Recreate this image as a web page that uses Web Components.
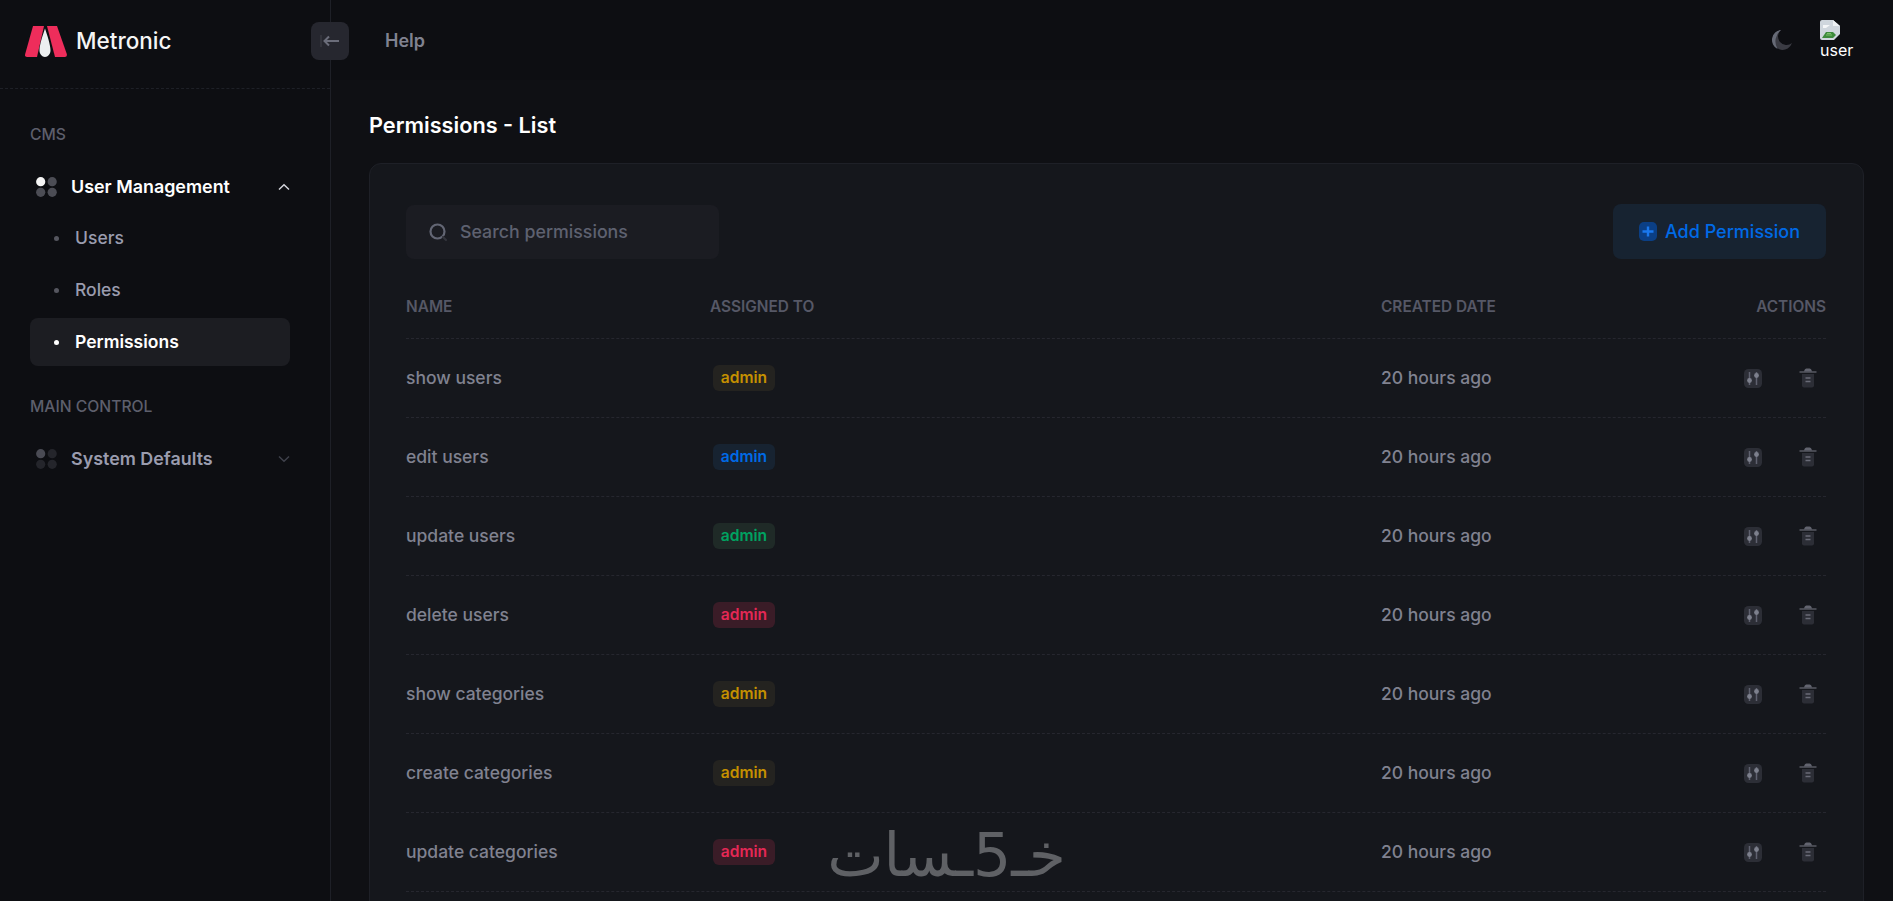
<!DOCTYPE html>
<html lang="en">
<head>
<meta charset="utf-8">
<title>Permissions - List</title>
<style>
  html, body { margin: 0; height: 901px; overflow: hidden; background: #0f1014; }
  body { font-family: Inter, "Noto Sans", sans-serif; }
</style>
</head>
<body>
<app-shell>
  <side-bar slot="side">
    <nav-label>CMS</nav-label>
    <nav-group label="User Management" open>
      <nav-link>Users</nav-link>
      <nav-link>Roles</nav-link>
      <nav-link active>Permissions</nav-link>
    </nav-group>
    <nav-label>MAIN CONTROL</nav-label>
    <nav-group label="System Defaults"></nav-group>
  </side-bar>
  <top-bar slot="top"></top-bar>
  <permissions-page slot="main"></permissions-page>
</app-shell>
<water-mark></water-mark>

<script>
const icons = {
  back: `<svg width="22" height="14" viewBox="0 0 22 14"><rect x="1" y="1" width="2" height="12" fill="#33343c"/><path d="M5.500 7H20" stroke="#6b6d7a" stroke-width="2"/><path d="M10 2.500 5.500 7l4.500 4.500" fill="none" stroke="#6b6d7a" stroke-width="2"/></svg>`,
  chevUp: `<svg width="12" height="8" viewBox="0 0 12 8"><path d="M1 6.500 6 1.800l5 4.700" fill="none" stroke="currentColor" stroke-width="1.500"/></svg>`,
  chevDown: `<svg width="12" height="8" viewBox="0 0 12 8"><path d="M1 1.500 6 6.200l5-4.700" fill="none" stroke="currentColor" stroke-width="1.500"/></svg>`,
  search: `<svg width="22" height="22" viewBox="0 0 22 22"><circle cx="10.500" cy="10.500" r="7" fill="none" stroke="#636674" stroke-width="2.200"/><path d="m16 16 3 3" stroke="#33343c" stroke-width="2.200" stroke-linecap="round"/></svg>`,
  plus: `<svg width="18" height="19" viewBox="0 0 18 19"><rect width="18" height="19" rx="5" fill="#0b3f85"/><path d="M9 4.500v10M3.500 9.500h11" stroke="#1a78ee" stroke-width="2.400"/></svg>`,
  sliders: `<svg width="18" height="19" viewBox="0 0 18 19"><rect width="18" height="19" rx="4.500" fill="#2c2e36"/><path d="M5.500 3v13M12.500 3v13" stroke="#5f6270" stroke-width="1.500"/><circle cx="5.500" cy="11.500" r="2.400" fill="#7d808d"/><circle cx="12.500" cy="6.500" r="2.400" fill="#7d808d"/></svg>`,
  trash: `<svg width="18" height="20" viewBox="0 0 18 20"><path d="M5 3.500C5.500 1 6.500 .5 9 .5s3.500 .5 4 3z" fill="#62646f"/><path d="M.5 4h17" stroke="#62646f" stroke-width="1.300"/><path d="M3 6h12v11.500a2 2 0 0 1-2 2H5a2 2 0 0 1-2-2z" fill="#2c2e36"/><path d="M6.500 10h5M6.500 13.500h5" stroke="#696b77" stroke-width="1.300"/></svg>`,
  moon: `<svg width="22" height="22" viewBox="0 0 22 22"><path d="M10 1A10 10 0 1 0 21 14 8.500 8.500 0 0 1 10 1z" fill="#3a3b43"/><path d="M10 1A10 10 0 0 0 6.500 19.900 14.500 14.500 0 0 1 10 1z" fill="#666a76"/></svg>`,
  broken: `<svg width="20" height="20" viewBox="0 0 20 20"><path d="M0 2q0-2 2-2h11l7 6v8l-6 6H2q-2 0-2-2z" fill="#cfd6dd"/><path d="M13 0v6h7z" fill="#eef1f4"/><path d="M3 5h7l-4 3H3z" fill="#f4f6f8"/><path d="M2 18 6 12h7l3 3-3 3z" fill="#3d8a3c"/><path d="M6 15h6M7 13.500h4" stroke="#7cc06a" stroke-width="1"/></svg>`
};

function dotGrid(bright, dim) {
  return `<svg class="dots" width="21" height="20" viewBox="0 0 21 20"><circle cx="4.700" cy="4.700" r="4.600" fill="${bright}"/><circle cx="16.200" cy="4.700" r="4.600" fill="${dim}"/><circle cx="4.700" cy="15.300" r="4.600" fill="${dim}"/><circle cx="16.200" cy="15.300" r="4.600" fill="${dim}"/></svg>`;
}

class AppShell extends HTMLElement {
  constructor() {
    super();
    this.attachShadow({ mode: 'open' }).innerHTML = `
      <style>
        :host { display: grid; grid-template-columns: 331px 1fr; grid-template-rows: 88px 1fr; height: 901px; overflow: hidden; }
        .side { grid-row: 1 / 3; }
        .main { min-width: 0; overflow: hidden; }
      </style>
      <div class="side"><slot name="side"></slot></div>
      <div><slot name="top"></slot></div>
      <div class="main"><slot name="main"></slot></div>
    `;
  }
}

class SideBar extends HTMLElement {
  constructor() {
    super();
    this.attachShadow({ mode: 'open' }).innerHTML = `
      <style>
        :host { display: block; height: 901px; box-sizing: border-box; background: #0d0e12; border-right: 1px solid #1e2027; position: relative; }
        .brand { height: 89px; box-sizing: border-box; border-bottom: 1px dashed #1e2027; display: flex; align-items: center; gap: 9px; padding: 0 0 6px 25px; }
        .brand span { font: 500 22.500px/1 Inter, sans-serif; color: #f5f5f5; }
        .toggle { position: absolute; left: 311px; top: 22px; width: 38px; height: 38px; border-radius: 8px; background: #26272f; display: flex; align-items: center; justify-content: center; z-index: 2; }
        nav { padding: 36px 40px 0 30px; display: flex; flex-direction: column; }
      </style>
      <div class="brand">
        <svg width="42" height="31" viewBox="0 0 42 31">
          <path d="M8 0h11L12 31H2Q-.5 31 .2 28z" fill="#ee2d5b"/>
          <path d="M22 0h10l9.800 28q.6 3-2 3H30z" fill="#ee2d5b"/>
          <path d="M20 2.500c2 6 5.500 16 5.500 22 0 3.500-2.500 6.500-5.500 6.500s-5.500-3-5.500-6.500c0-6 3.500-16 5.500-22z" fill="#eceff0"/>
        </svg>
        <span>Metronic</span>
      </div>
      <div class="toggle">${icons.back}</div>
      <nav><slot></slot></nav>
    `;
  }
}

class NavLabel extends HTMLElement {
  constructor() {
    super();
    this.attachShadow({ mode: 'open' }).innerHTML = `
      <style>
        :host { display: block; height: 20px; font: 500 15.700px/20px Inter, sans-serif; color: #5d5f6c; margin: 0 0 20px; text-transform: uppercase; }
      </style>
      <slot></slot>
    `;
  }
}

class NavGroup extends HTMLElement {
  constructor() {
    super();
    this.attachShadow({ mode: 'open' });
  }
  connectedCallback() {
    const open = this.hasAttribute('open');
    const label = this.getAttribute('label');
    this.shadowRoot.innerHTML = `
      <style>
        :host { display: block; margin-bottom: ${open ? '31px' : '0'}; }
        .head { display: flex; align-items: center; height: 44px; padding: 0 0 0 6px; font: 600 17.900px/1 Inter, sans-serif; color: ${open ? '#fff' : '#9a9cae'}; }
        .dots { flex: none; margin-right: 14px; }
        .chev { margin-left: auto; display: flex; color: ${open ? '#d4d5dc' : '#3f414b'}; }
        .kids { display: flex; flex-direction: column; margin-top: 5px; gap: 4px; }
      </style>
      <div class="head">
        ${open ? dotGrid('#f5f5f5', '#4c4d55') : dotGrid('#4a4b54', '#24252b')}
        <span>${label}</span>
        <span class="chev">${open ? icons.chevUp : icons.chevDown}</span>
      </div>
      ${open ? '<div class="kids"><slot></slot></div>' : ''}
    `;
  }
}

class NavLink extends HTMLElement {
  constructor() {
    super();
    this.attachShadow({ mode: 'open' }).innerHTML = `
      <style>
        :host { display: flex; align-items: center; height: 48px; padding-left: 24px; border-radius: 8px; font: 500 17.500px/1 Inter, sans-serif; color: #9a9cae; }
        :host([active]) { background: #1c1d22; color: #fff; font-weight: 600; }
        i { width: 5px; height: 5px; border-radius: 50%; background: #55565f; margin-right: 16px; }
        :host([active]) i { background: #fff; }
      </style>
      <i></i><slot></slot>
    `;
  }
}

class TopBar extends HTMLElement {
  constructor() {
    super();
    this.attachShadow({ mode: 'open' }).innerHTML = `
      <style>
        :host { display: flex; align-items: center; height: 80px; padding: 0 40px 0 54px; background: #0d0e12; font-family: Inter, sans-serif; }
        .help { font-weight: 600; font-size: 18px; color: #808290; }
        .right { margin-left: auto; display: flex; align-items: center; gap: 27px; }
        .moon { display: flex; }
        .user { display: flex; flex-direction: column; width: 33px; color: #fff; font-size: 16px; line-height: 21px; }
        .user svg { display: block; }
      </style>
      <span class="help">Help</span>
      <div class="right">
        <span class="moon">${icons.moon}</span>
        <div class="user">${icons.broken}<span>user</span></div>
      </div>
    `;
  }
}

class PermissionsPage extends HTMLElement {
  constructor() {
    super();
    const rows = [
      ['show users', 'warning'], ['edit users', 'primary'], ['update users', 'success'], ['delete users', 'danger'],
      ['show categories', 'warning'], ['create categories', 'warning'], ['update categories', 'danger']
    ];
    this.attachShadow({ mode: 'open' }).innerHTML = `
      <style>
        :host { display: block; padding: 0 29px 0 38px; font-family: Inter, sans-serif; }
        h1 { margin: 0 0 1px; height: 74px; display: flex; align-items: center; font-size: 21.700px; font-weight: 600; color: #fff; }
        .card { background: #15171c; border: 1px solid #1e2027; border-radius: 12px; padding: 40px 37px 40px 36px; }
        .tools { display: flex; justify-content: space-between; align-items: center; height: 55px; margin-bottom: 24px; }
        .search { width: 313px; height: 54px; box-sizing: border-box; background: #1b1c22; border-radius: 8px; display: flex; align-items: center; gap: 11px; padding-left: 21px; font-size: 17.800px; font-weight: 500; color: #5e6170; }
        .search svg { flex: none; }
        .add { width: 213px; height: 55px; box-sizing: border-box; background: #172331; border-radius: 8px; display: flex; align-items: center; justify-content: center; gap: 8px; font-size: 18px; font-weight: 500; color: #006ae6; }
        .head { display: grid; grid-template-columns: 304px 671px 1fr auto; height: 56px; align-items: center; box-sizing: border-box; border-bottom: 1px dashed #26272f; font-size: 15.400px; font-weight: 600; color: #565866; padding-bottom: 8px; text-transform: uppercase; }
      </style>
      <h1>Permissions - List</h1>
      <div class="card">
        <div class="tools">
          <div class="search">${icons.search}<span>Search permissions</span></div>
          <div class="add">${icons.plus}<span>Add Permission</span></div>
        </div>
        <div class="head"><span>Name</span><span>Assigned to</span><span>Created date</span><span>Actions</span></div>
        ${rows.map(r => `<perm-row name="${r[0]}" tone="${r[1]}" date="20 hours ago"></perm-row>`).join('')}
      </div>
    `;
  }
}

class PermRow extends HTMLElement {
  constructor() {
    super();
    this.attachShadow({ mode: 'open' });
  }
  connectedCallback() {
    const name = this.getAttribute('name');
    const tone = this.getAttribute('tone');
    const date = this.getAttribute('date');
    this.shadowRoot.innerHTML = `
      <style>
        :host { display: grid; grid-template-columns: 304px 671px 1fr auto; align-items: center; height: 79px; box-sizing: border-box; border-bottom: 1px dashed #26272f; font: 500 17.500px/1 Inter, sans-serif; color: #808290; }
        .acts { display: flex; align-items: center; gap: 37px; padding-right: 9px; }
        .acts svg { display: block; }
      </style>
      <span>${name}</span>
      <span><tone-badge tone="${tone}">admin</tone-badge></span>
      <span>${date}</span>
      <span class="acts">${icons.sliders}${icons.trash}</span>
    `;
  }
}

class ToneBadge extends HTMLElement {
  constructor() {
    super();
    this.attachShadow({ mode: 'open' }).innerHTML = `
      <style>
        :host { display: inline-flex; align-items: center; justify-content: center; width: 62px; height: 26px; margin-left: 3px; border-radius: 6px; font: 600 15.600px/1 Inter, sans-serif; }
        :host([tone=warning]) { background: #242320; color: #c59000; }
        :host([tone=primary]) { background: #172331; color: #006ae6; }
        :host([tone=success]) { background: #1f2a27; color: #00a261; }
        :host([tone=danger]) { background: #3a1c27; color: #e42855; }
      </style>
      <slot></slot>
    `;
  }
}

class WaterMark extends HTMLElement {
  constructor() {
    super();
    this.attachShadow({ mode: 'open' }).innerHTML = `
      <style>
        :host { position: absolute; left: 823px; top: 815px; width: 247px; height: 80px; display: block; overflow: hidden; text-align: center; font: 400 60px/80px "DejaVu Sans", sans-serif; color: #5f6165; direction: rtl; white-space: nowrap; }
      </style>
      <span>خـ5ـسات</span>
    `;
  }
}

customElements.define('app-shell', AppShell);
customElements.define('side-bar', SideBar);
customElements.define('nav-label', NavLabel);
customElements.define('nav-group', NavGroup);
customElements.define('nav-link', NavLink);
customElements.define('top-bar', TopBar);
customElements.define('permissions-page', PermissionsPage);
customElements.define('perm-row', PermRow);
customElements.define('tone-badge', ToneBadge);
customElements.define('water-mark', WaterMark);
</script>
</body>
</html>
